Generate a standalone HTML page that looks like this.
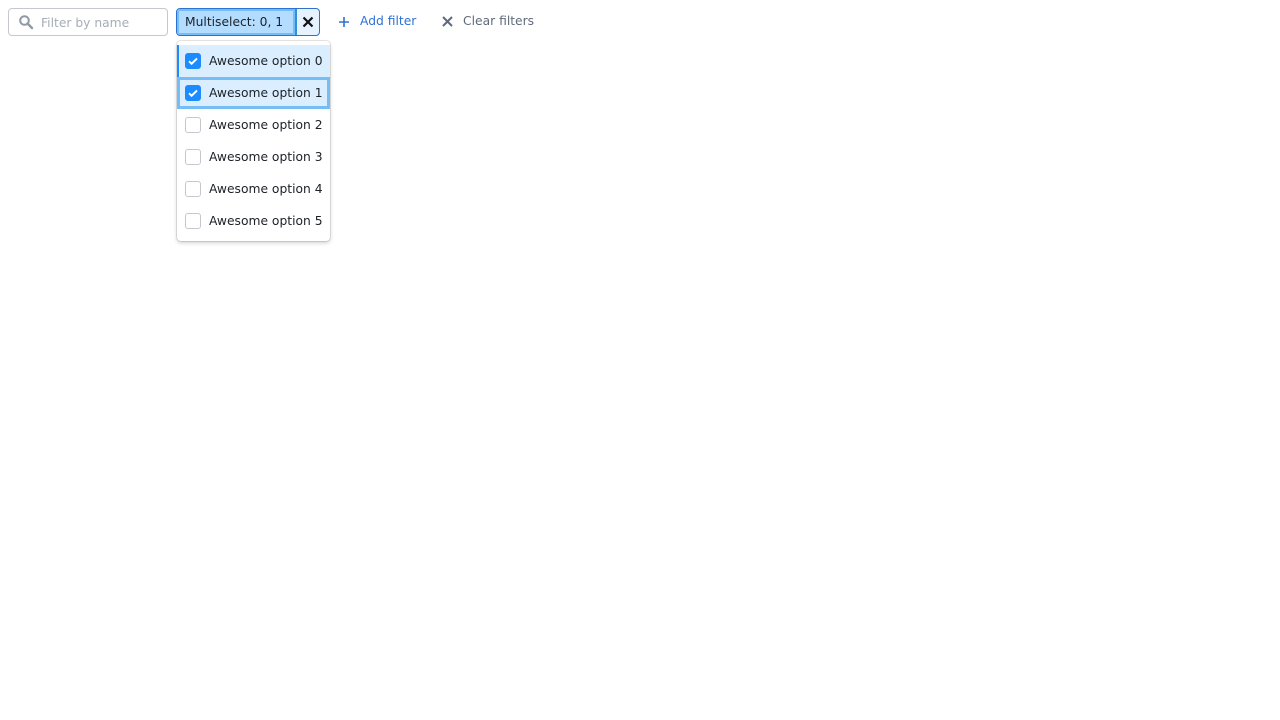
<!DOCTYPE html>
<html><head><style>
*{box-sizing:border-box;margin:0;padding:0}
body{width:1280px;height:720px;background:#fff;font-family:"DejaVu Sans","Liberation Sans",sans-serif;font-size:12.3px;color:#1c2127;position:relative;overflow:hidden}
.abs{position:absolute}
.input{left:8px;top:8px;width:160px;height:28px;border:1px solid #c5c9cf;border-radius:4px}
.input span{position:absolute;left:32px;top:7px;color:#a7adb5}
.chip{left:176px;top:8px;width:144px;height:28px;border:1px solid #2d72d2;border-radius:4px;overflow:hidden;background:#e6f2ff}
.chipl{position:absolute;left:0;top:0;width:120px;height:26px;background:#b3dcff;box-shadow:inset 0 0 0 2px #74bdf5;border-right:2px solid #2d8fe0;}
.chipl span{position:absolute;left:8px;top:6px}
.menu{left:177px;top:41px;width:153px;height:200px;border-radius:4px;background:#fff;box-shadow:0 0 0 1px rgba(17,20,24,.1),0 2px 4px rgba(17,20,24,.2)}
.item{position:absolute;left:0;width:153px;height:32px}
.item span{position:absolute;left:32px;top:9px}
.cb{position:absolute;left:8px;top:8px;width:16px;height:16px;border-radius:3px;border:1px solid #c5c9cf;background:#fff}
.cb.on{background:#1a8cff;border-color:#1a8cff}
</style></head><body>
<div class="abs input">
<svg class="abs" style="left:9px;top:5px" width="16" height="16" viewBox="0 0 16 16"><circle cx="6.5" cy="6.5" r="4.3" fill="none" stroke="#8f99a8" stroke-width="2"/><path d="M9.5 9.5l4.5 4.5" stroke="#8f99a8" stroke-width="2.4" stroke-linecap="round"/></svg>
<span>Filter by name</span></div>
<div class="abs chip"><div class="chipl"><span>Multiselect: 0, 1</span></div>
<svg class="abs" style="left:125px;top:7px" width="12" height="12" viewBox="0 0 12 12"><path d="M1.5 1.5l9 9M10.5 1.5l-9 9" stroke="#111" stroke-width="2.2"/></svg></div>
<svg class="abs" style="left:338px;top:16px" width="12" height="12" viewBox="0 0 12 12"><path d="M6 1v10M1 6h10" stroke="#2d72d2" stroke-width="1.6"/></svg>
<div class="abs" style="left:360px;top:14px;color:#2d72d2">Add filter</div>
<svg class="abs" style="left:442px;top:16px" width="11" height="11" viewBox="0 0 11 11"><path d="M1 1l9 9M10 1l-9 9" stroke="#5f6b7c" stroke-width="2"/></svg>
<div class="abs" style="left:463px;top:14px;color:#5f6b7c">Clear filters</div>
<div class="abs menu">
<div class="item" style="top:4px;background:#dbeeff;border-left:2px solid #1a8cff"><div class="cb on" style="left:6px"><svg width="14" height="14" viewBox="0 0 14 14"><path d="M3 7.2l2.6 2.5L11 4.5" fill="none" stroke="#fff" stroke-width="2"/></svg></div><span style="left:30px">Awesome option 0</span></div>
<div class="item" style="top:36px;background:#dbeeff;box-shadow:inset 0 0 0 3px #74bdf5"><div class="cb on"><svg width="14" height="14" viewBox="0 0 14 14"><path d="M3 7.2l2.6 2.5L11 4.5" fill="none" stroke="#fff" stroke-width="2"/></svg></div><span>Awesome option 1</span></div>
<div class="item" style="top:68px"><div class="cb"></div><span>Awesome option 2</span></div>
<div class="item" style="top:100px"><div class="cb"></div><span>Awesome option 3</span></div>
<div class="item" style="top:132px"><div class="cb"></div><span>Awesome option 4</span></div>
<div class="item" style="top:164px"><div class="cb"></div><span>Awesome option 5</span></div>
</div>
</body></html>
